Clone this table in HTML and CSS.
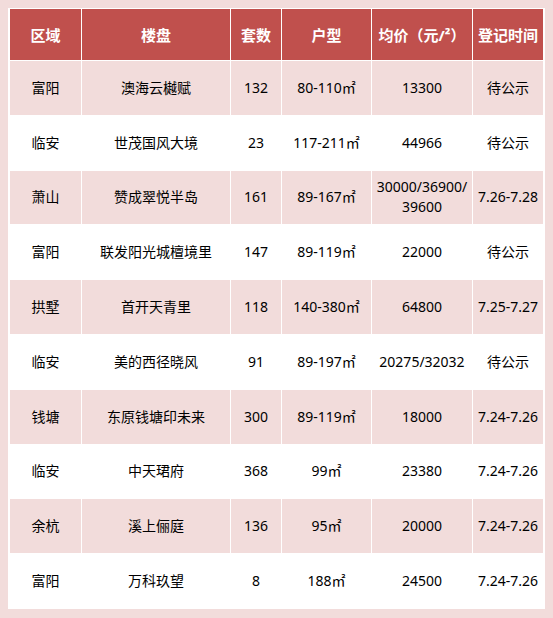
FILE: index.html
```html
<!DOCTYPE html>
<html lang="zh-CN">
<head>
<meta charset="utf-8">
<title>楼盘登记</title>
<link rel="stylesheet" href="styles.css">
</head>
<body>
<div class="frame">
<table class="grid">
<colgroup>
<col class="c1"><col class="c2"><col class="c3"><col class="c4"><col class="c5"><col class="c6">
</colgroup>
<thead>
<tr class="head"><th>区域</th><th>楼盘</th><th>套数</th><th>户型</th><th>均价（元/²）</th><th>登记时间</th></tr>
</thead>
<tbody>
<tr class="pink"><td>富阳</td><td>澳海云樾赋</td><td>132</td><td>80-110㎡</td><td>13300</td><td>待公示</td></tr>
<tr class="white"><td>临安</td><td>世茂国风大境</td><td>23</td><td>117-211㎡</td><td>44966</td><td>待公示</td></tr>
<tr class="pink"><td>萧山</td><td>赞成翠悦半岛</td><td>161</td><td>89-167㎡</td><td class="two">30000/36900/<br>39600</td><td>7.26-7.28</td></tr>
<tr class="white"><td>富阳</td><td>联发阳光城檀境里</td><td>147</td><td>89-119㎡</td><td>22000</td><td>待公示</td></tr>
<tr class="pink"><td>拱墅</td><td>首开天青里</td><td>118</td><td>140-380㎡</td><td>64800</td><td>7.25-7.27</td></tr>
<tr class="white"><td>临安</td><td>美的西径晓风</td><td>91</td><td>89-197㎡</td><td>20275/32032</td><td>待公示</td></tr>
<tr class="pink"><td>钱塘</td><td>东原钱塘印未来</td><td>300</td><td>89-119㎡</td><td>18000</td><td>7.24-7.26</td></tr>
<tr class="white"><td>临安</td><td>中天珺府</td><td>368</td><td>99㎡</td><td>23380</td><td>7.24-7.26</td></tr>
<tr class="pink"><td>余杭</td><td>溪上俪庭</td><td>136</td><td>95㎡</td><td>20000</td><td>7.24-7.26</td></tr>
<tr class="white"><td>富阳</td><td>万科玖望</td><td>8</td><td>188㎡</td><td>24500</td><td>7.24-7.26</td></tr>
</tbody>
</table>
</div>
</body>
</html>
```

FILE: styles.css
```css
html, body {
  margin: 0;
  padding: 0;
  background: #f2dcdb;
}
body {
  padding: 8px 0 0 8px;
  font-family: "Noto Sans", "Noto Sans CJK SC", sans-serif;
  color: #000;
}
.frame {
  display: inline-block;
  background: #fff;
  padding: 0 1px;
}
.grid {
  table-layout: fixed;
  border-collapse: separate;
  border-spacing: 1px;
  width: 535px;
  background: #fff;
}
.c1 { width: 71px; }
.c2 { width: 148px; }
.c3 { width: 50px; }
.c4 { width: 89px; }
.c5 { width: 100px; }
.c6 { width: 70px; }
.grid th, .grid td {
  padding: 0;
  text-align: center;
  vertical-align: middle;
  white-space: nowrap;
  line-height: 20px;
}
.head th {
  height: 51px;
  background: #c0504d;
  color: #fff;
  font-weight: bold;
  font-size: 15px;
}
.grid td {
  height: 53.8px;
  font-size: 14px;
}
.pink td { background: #f2dcdb; }
.white td { background: #fff; }
```
